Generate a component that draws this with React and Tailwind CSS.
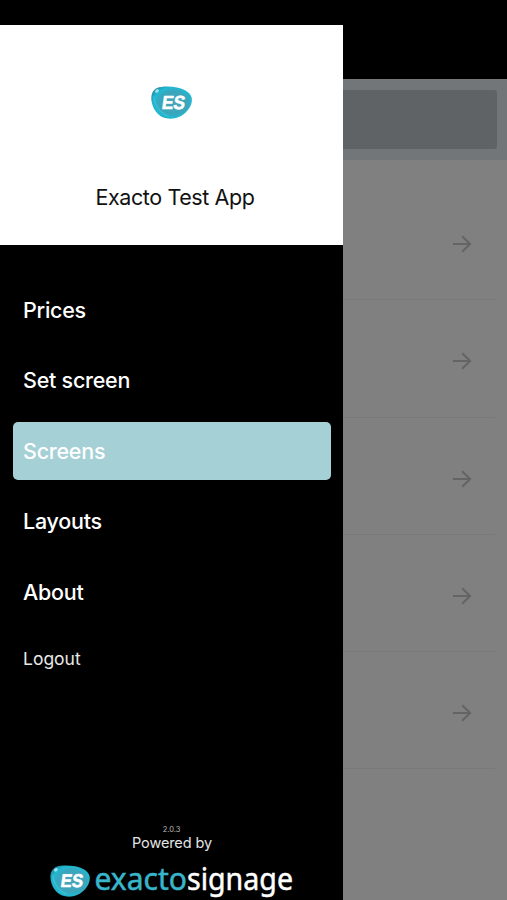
import { useState } from 'react'

const MENU_ITEMS = ['Prices', 'Set screen', 'Screens', 'Layouts', 'About']
const ROWS = [1, 2, 3, 4, 5]

function LogoMark({ id, className }) {
  return (
    <svg viewBox="0 0 41 33" className={className} aria-hidden="true">
      <defs>
        <radialGradient id={id} cx="0.54" cy="0.5" r="0.58">
          <stop offset="0" stopColor="#4aa3b8" />
          <stop offset="0.6" stopColor="#3aa6bc" />
          <stop offset="0.82" stopColor="#1fbad3" />
          <stop offset="1" stopColor="#2497ad" />
        </radialGradient>
      </defs>
      <path
        d="M6 2C10 .2 19 0 26 1.4C34.5 3.2 41 7.4 40.9 14C40.7 23 31 32.7 19.5 32.7C9 32.7 2.4 25.5 .6 15.5C-.4 9.4 1.2 4.3 6 2Z"
        fill={`url(#${id})`}
      />
      <path d="M2.4 10C3.4 18 8 27 17.5 30" fill="none" stroke="#69d5e5" strokeWidth="1.3" opacity="0.35" />
      <ellipse cx="6" cy="5" rx="2.1" ry="1.6" transform="rotate(-35 6 5)" fill="#b9f0f7" opacity="0.8" />
      <text
        transform="translate(10.2 23) skewX(-8)"
        textLength="23"
        lengthAdjust="spacingAndGlyphs"
        fill="#fff"
        stroke="#fff"
        strokeWidth="0.6"
        strokeLinejoin="round"
        className="font-['Liberation_Sans',sans-serif] text-[19px] font-bold"
      >
        ES
      </text>
    </svg>
  )
}

function Wordmark() {
  return (
    <svg viewBox="0 0 200 38" className="-mt-[2px] h-[38px] w-[200px] overflow-visible" role="img">
      <text x="0.5" y="28" textLength="92.5" lengthAdjust="spacingAndGlyphs" fill="#39b5ca" stroke="#39b5ca" strokeWidth="0.5" className="font-['Noto_Sans',sans-serif] text-[30px] leading-none">
        exacto
      </text>
      <text x="93" y="28" textLength="106" lengthAdjust="spacingAndGlyphs" fill="#fff" stroke="#fff" strokeWidth="0.5" className="font-['Noto_Sans',sans-serif] text-[30px] leading-none">
        signage
      </text>
    </svg>
  )
}

function ArrowIcon() {
  return (
    <svg viewBox="0 0 20 20" className="h-5 w-5" fill="none" stroke="#646464" strokeWidth="2.2">
      <path d="M1 10H18M10.2 2.2L18 10L10.2 17.8" />
    </svg>
  )
}

function Drawer({ active, onSelect }) {
  return (
    <aside className="flex h-full w-[343px] shrink-0 flex-col bg-black pt-[25px] text-white">
      <header className="flex h-[220px] shrink-0 flex-col items-center bg-white pt-[61px]">
        <LogoMark id="markHeader" className="h-[33px] w-[41px]" />
        <h1 className="mt-[62px] ml-[7px] text-[21.5px] leading-8 tracking-[-0.4px] whitespace-nowrap text-[#111]">Exacto Test App</h1>
      </header>

      <nav className="mt-[36px] flex flex-col gap-3 pr-[12px] pl-[13px]">
        {MENU_ITEMS.map(item => (
          <button
            key={item}
            type="button"
            onClick={() => onSelect(item)}
            className={`flex h-[58.4px] items-center rounded-[5px] px-[10px] text-left text-[21.5px] font-medium tracking-[-0.25px] ${item === active ? 'bg-[#a5d0d6]' : ''}`}
          >
            {item}
          </button>
        ))}
        <button type="button" className="mt-[2px] flex h-[48px] items-center px-[10px] text-left text-[17.5px] text-[#e8e8e8]">
          Logout
        </button>
      </nav>

      <footer className="mt-auto flex h-[75px] shrink-0 flex-col items-center">
        <span className="text-[7.5px] leading-[10px] text-[#bbb]">2.0.3</span>
        <span className="ml-[1px] text-[14.5px] leading-[15px] tracking-[-0.1px] text-[#e5e5e5]">Powered by</span>
        <div className="mt-[14px] flex items-start gap-[4px]">
          <LogoMark id="markFooter" className="mt-[1px] h-[32px] w-[40px]" />
          <Wordmark />
        </div>
      </footer>
    </aside>
  )
}

export default function App() {
  const [active, setActive] = useState('Screens')

  return (
    <div className="flex h-[900px] w-[507px] overflow-hidden bg-black font-[Inter,sans-serif]">
      <Drawer active={active} onSelect={setActive} />

      {/* dimmed page behind the drawer */}
      <main className="flex flex-1 flex-col bg-[#808080]">
        <div className="h-[79px] shrink-0 bg-black" />
        <div className="h-[81px] shrink-0 bg-[#727678] pt-[11px] pr-[10px]">
          <div className="h-[59px] rounded-r-[3px] bg-[#5f6366]" />
        </div>
        <ul className="mt-[23px] pr-[12px]">
          {ROWS.map(row => (
            <li key={row} className="flex h-[117.3px] items-center justify-end border-b border-[#797979] pt-[6px] pr-[23px]">
              <ArrowIcon />
            </li>
          ))}
        </ul>
      </main>
    </div>
  )
}
